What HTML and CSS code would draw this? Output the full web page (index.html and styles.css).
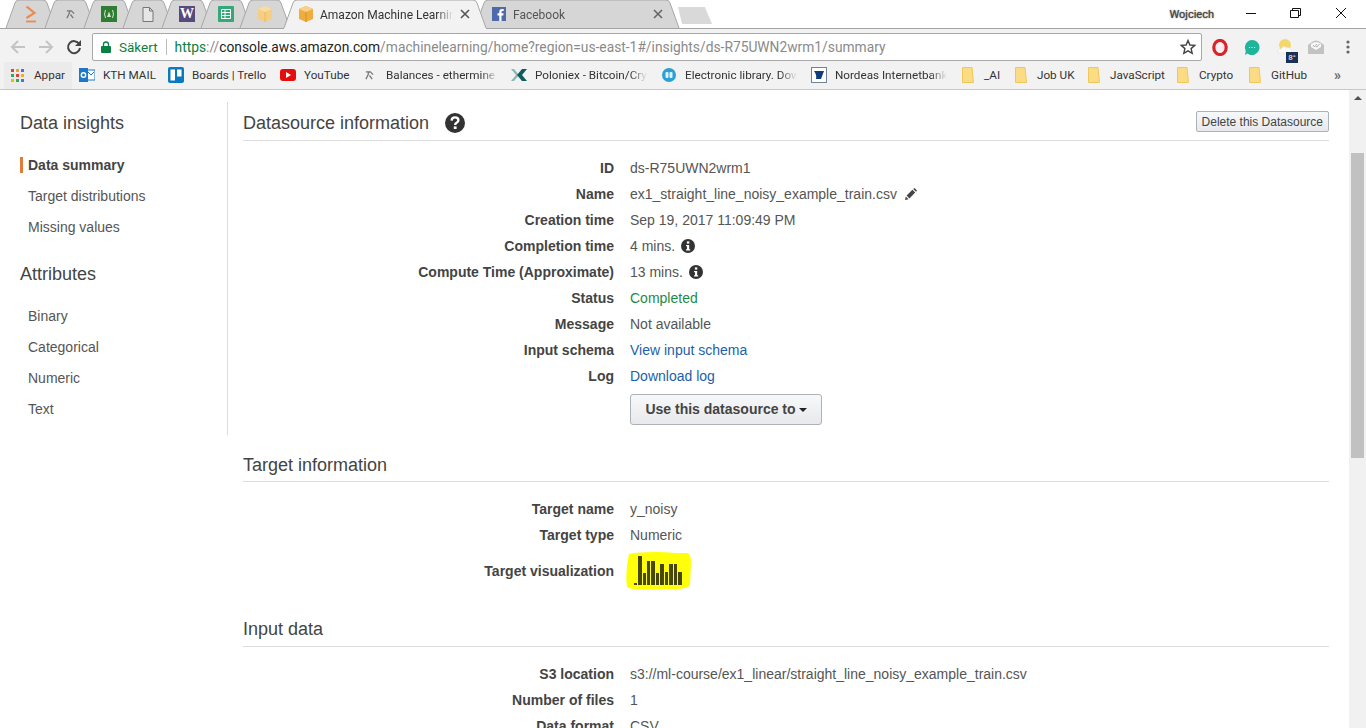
FILE: index.html
```html
<!DOCTYPE html>
<html lang="sv">
<head>
<meta charset="utf-8">
<title>Amazon Machine Learning</title>
<link rel="stylesheet" href="styles.css">
</head>
<body>
<header class="chrome">
  <div class="tabstrip">
    <div class="tab pinned"><svg class="shape" width="52" height="28"><path d="M1 28 L10 3 Q11 0 14 0 H38 Q41 0 42 3 L51 28"/></svg>
      <svg class="favicon fav-aws" width="12" height="17" viewBox="0 0 12 17"><path d="M1.5 .5 L9.5 7 L1.5 12" fill="none" stroke="#ee8a4f" stroke-width="2.2"/><path d="M1 15.5 H11" stroke="#ee8a4f" stroke-width="1.8"/></svg></div>
    <div class="tab pinned"><svg class="shape" width="52" height="28"><path d="M1 28 L10 3 Q11 0 14 0 H38 Q41 0 42 3 L51 28"/></svg>
      <svg class="favicon" width="9" height="9" viewBox="0 0 10 10"><path d="M1 1 H6 L9 4 M5 1 L3 3 M4 3 L1 9 M5 5 L8 9" fill="none" stroke="#777" stroke-width="1.4"/></svg></div>
    <div class="tab pinned"><svg class="shape" width="52" height="28"><path d="M1 28 L10 3 Q11 0 14 0 H38 Q41 0 42 3 L51 28"/></svg>
      <svg class="favicon" width="16" height="16" viewBox="0 0 16 16"><rect width="16" height="16" fill="#2e7d32"/><path d="M4.5 4 Q2.5 8 4.5 12 M11.5 4 Q13.5 8 11.5 12" fill="none" stroke="#cfe8cf" stroke-width="1"/><path d="M6 11 L8 5.5 L10 11 Z" fill="#cfe8cf"/></svg></div>
    <div class="tab pinned"><svg class="shape" width="52" height="28"><path d="M1 28 L10 3 Q11 0 14 0 H38 Q41 0 42 3 L51 28"/></svg>
      <svg class="favicon" width="12" height="15" viewBox="0 0 12 15"><path d="M1 .5 H7.5 L11 4 V14.5 H1 Z M7.5 .5 V4 H11" fill="#e6e6e6" stroke="#777"/></svg></div>
    <div class="tab pinned"><svg class="shape" width="52" height="28"><path d="M1 28 L10 3 Q11 0 14 0 H38 Q41 0 42 3 L51 28"/></svg>
      <span class="favicon fav-w">W</span></div>
    <div class="tab pinned"><svg class="shape" width="52" height="28"><path d="M1 28 L10 3 Q11 0 14 0 H38 Q41 0 42 3 L51 28"/></svg>
      <svg class="favicon" width="16" height="16" viewBox="0 0 16 16"><rect width="16" height="16" rx="1" fill="#34a878"/><path d="M3.5 3.5 H12.5 V12.5 H3.5 Z M3.5 6.5 H12.5 M3.5 9.5 H12.5 M7 3.5 V12.5" fill="none" stroke="#fff"/></svg></div>
    <div class="tab pinned last"><svg class="shape" width="52" height="28"><path d="M1 28 L10 3 Q11 0 14 0 H38 Q41 0 42 3 L51 28"/></svg>
      <svg class="favicon" width="16" height="16" viewBox="0 0 16 16"><path d="M1 3 L8 0 L15 3 V13 L8 16 L1 13 Z" fill="#f5cd83"/><path d="M1 3 L8 6 L15 3 L8 0 Z" fill="#f8dca6"/><path d="M8 6 V16" stroke="#eeb95e"/></svg></div>
    <div class="tab wide active"><svg class="shape" width="204" height="28"><path d="M1 28 L10 3 Q11 0 14 0 H190 Q193 0 194 3 L203 28"/></svg>
      <svg class="icon16" width="16" height="16" viewBox="0 0 16 16"><path d="M1 3 L8 0 L15 3 V13 L8 16 L1 13 Z" fill="#f0ad3f"/><path d="M1 3 L8 6 L15 3 L8 0 Z" fill="#f7d08a"/><path d="M8 6 V16" stroke="#d68f22"/></svg>
      <span class="tab-title">Amazon Machine Learning</span>
      <svg class="tab-close" width="10" height="10" viewBox="0 0 10 10"><path d="M1 1 L9 9 M9 1 L1 9" stroke="#555" stroke-width="1.6"/></svg></div>
    <div class="tab wide fb"><svg class="shape" width="206" height="28"><path d="M1 28 L10 3 Q11 0 14 0 H192 Q195 0 196 3 L205 28"/></svg>
      <svg class="icon16" width="14" height="14" viewBox="0 0 14 14"><rect width="14" height="14" fill="#4f6aab"/><path d="M9.5 14 V8.5 H11.3 L11.6 6.3 H9.5 V5 Q9.5 4 10.6 4 H11.7 V2 H10 Q7.3 2 7.3 4.7 V6.3 H5.5 V8.5 H7.3 V14 Z" fill="#fff"/></svg>
      <span class="tab-title dim">Facebook</span>
      <svg class="tab-close" width="10" height="10" viewBox="0 0 10 10"><path d="M1 1 L9 9 M9 1 L1 9" stroke="#666" stroke-width="1.6"/></svg></div>
    <div class="newtab"></div>
    <div class="winbar">
      <span class="profile">Wojciech</span>
      <svg class="winctl" width="46" height="14" viewBox="0 0 46 14"><path d="M18 6.5 H28" stroke="#111"/></svg>
      <svg class="winctl" width="46" height="14" viewBox="0 0 46 14"><path d="M16.5 3.5 H24.5 V10.5 H16.5 Z M18.5 3.5 V1.5 H26.5 V8.5 H24.5" fill="none" stroke="#111"/></svg>
      <svg class="winctl" width="46" height="14" viewBox="0 0 46 14"><path d="M16 1 L26 11 M26 1 L16 11" stroke="#111"/></svg>
    </div>
  </div>
  <div class="toolbar">
    <svg class="navbtn" width="16" height="14" viewBox="0 0 16 14"><path d="M15 7 H2 M8 1 L2 7 L8 13" fill="none" stroke="#c4c4c4" stroke-width="2"/></svg>
    <svg class="navbtn" width="16" height="14" viewBox="0 0 16 14"><path d="M1 7 H14 M8 1 L14 7 L8 13" fill="none" stroke="#c4c4c4" stroke-width="2"/></svg>
    <svg class="navbtn" width="16" height="16" viewBox="0 0 16 16"><path d="M13.2 5 A6 6 0 1 0 14 9" fill="none" stroke="#444" stroke-width="2"/><path d="M15 1 V7 H9 Z" fill="#444"/></svg>
    <div class="omnibox">
      <svg class="lock" width="10" height="12" viewBox="0 0 10 12"><path d="M2.5 5 V3.5 A2.5 2.5 0 0 1 7.5 3.5 V5" fill="none" stroke="#0b8043" stroke-width="1.3"/><rect y="5" width="10" height="7" rx="1" fill="#0b8043"/></svg>
      <span class="secure">Säkert</span>
      <span class="omni-sep"></span>
      <span class="url"><span class="url-https">https</span><span class="url-dim">://</span><span class="url-host">console.aws.amazon.com</span><span class="url-dim">/machinelearning/home?region=us-east-1#/insights/ds-R75UWN2wrm1/summary</span></span>
      <svg class="star" width="16" height="16" viewBox="0 0 16 16"><path d="M8 1.5 L9.9 6 L14.8 6.4 L11.1 9.6 L12.2 14.4 L8 11.9 L3.8 14.4 L4.9 9.6 L1.2 6.4 L6.1 6 Z" fill="none" stroke="#444" stroke-width="1.4"/></svg>
    </div>
    <div class="extensions">
      <svg class="ext opera" width="16" height="17" viewBox="0 0 16 17"><ellipse cx="8" cy="8.5" rx="6.2" ry="7" fill="#f6eaea" stroke="#d8232a" stroke-width="3.2"/><path d="M5.5 11 V5.5 Q5.5 4.6 6.2 4.6 V4 Q7 3 7.6 4 Q8.6 3 9.2 4 Q10.4 4 10.4 5.5 V10 Q10.4 13 8 13 Q6.2 13 5.5 11 Z" fill="#f8f0f0"/></svg>
      <svg class="ext bubble" width="16" height="17" viewBox="0 0 16 17"><path d="M8 1 A7.5 7.5 0 1 1 3.5 14.5 L1 16 L1.8 12 A7.5 7.5 0 0 1 8 1 Z" fill="#1fb59a"/><path d="M5 8.5 H5.9 M7.6 8.5 H8.5 M10.2 8.5 H11.1" stroke="#fff" stroke-width="1.2"/></svg>
      <div class="ext weather">
        <svg class="weather-art" width="16" height="15" viewBox="0 0 16 15"><circle cx="8" cy="6" r="6" fill="#f5d76e"/><path d="M1 14 Q0 10 4 10 Q6 6 10 8.5 Q15 8.5 15 14 Z" fill="#fafafa" stroke="#dcdcdc" stroke-width=".5"/></svg>
        <span class="temp">8°</span>
      </div>
      <svg class="ext mail" width="16" height="15" viewBox="0 0 16 15"><path d="M0 5 L4 2 Q8 -1 12 2 L16 5 V14 H0 Z" fill="#c2c2c2"/><path d="M3 4 Q8 0 13 4 V7 L8 10 L3 7 Z" fill="#f7f7f7"/><path d="M5 5 L6.5 7 L9 4 M8 6.5 L9 7 L11.5 4" fill="none" stroke="#a0a0a0" stroke-width=".8"/></svg>
      <svg class="ext menu" width="4" height="14" viewBox="0 0 4 14"><circle cx="2" cy="2" r="1.6" fill="#666"/><circle cx="2" cy="7" r="1.6" fill="#666"/><circle cx="2" cy="12" r="1.6" fill="#666"/></svg>
    </div>
  </div>
  <nav class="bookmarks">
    <a class="bm apps">
      <svg width="13" height="13" viewBox="0 0 13 13"><g><rect width="3" height="3" fill="#d9453c"/><rect x="5" width="3" height="3" fill="#e8a33d"/><rect x="10" width="3" height="3" fill="#3b78e7"/><rect y="5" width="3" height="3" fill="#34a853"/><rect x="5" y="5" width="3" height="3" fill="#d9453c"/><rect x="10" y="5" width="3" height="3" fill="#f4b400"/><rect y="10" width="3" height="3" fill="#f4b400"/><rect x="5" y="10" width="3" height="3" fill="#34a853"/><rect x="10" y="10" width="3" height="3" fill="#3b78e7"/></g></svg>
      <span>Appar</span></a>
    <a class="bm"><svg width="16" height="16" viewBox="0 0 16 16"><rect x="7" y="3" width="9" height="10" fill="#fff" stroke="#1f77c9"/><path d="M9 5 L12 8 L15 5" fill="none" stroke="#1f77c9"/><rect y="1" width="9" height="14" fill="#1f77c9"/><circle cx="4.5" cy="8" r="2.2" fill="none" stroke="#fff" stroke-width="1.4"/></svg><span>KTH MAIL</span></a>
    <a class="bm"><svg width="16" height="16" viewBox="0 0 16 16"><rect width="16" height="16" rx="2" fill="#0a79bf"/><rect x="2.5" y="2.5" width="4.5" height="11" fill="#fff"/><rect x="9" y="2.5" width="4.5" height="7" fill="#fff"/></svg><span>Boards | Trello</span></a>
    <a class="bm"><svg width="16" height="12" viewBox="0 0 16 12"><rect width="16" height="12" rx="3" fill="#e60d0d"/><path d="M6 3 L11 6 L6 9 Z" fill="#fff"/></svg><span>YouTube</span></a>
    <a class="bm bal"><svg width="9" height="9" viewBox="0 0 10 10"><path d="M1 1 H6 L9 4 M5 1 L3 3 M4 3 L1 9 M5 5 L8 9" fill="none" stroke="#777" stroke-width="1.4"/></svg><span class="fade">Balances - ethermine</span></a>
    <a class="bm"><svg width="16" height="12" viewBox="0 0 16 12"><path d="M0 0 L5 6 L0 12 H3 L8 6 L3 0 Z" fill="#8fb6b6"/><path d="M16 0 L11 6 L16 12 H11 L6 6 L11 0 Z" fill="#0f5c5c"/></svg><span class="fade">Poloniex - Bitcoin/Crypto</span></a>
    <a class="bm lib"><svg width="14" height="14" viewBox="0 0 14 14"><circle cx="7" cy="7" r="7" fill="#2aa0d6"/><rect x="3.5" y="4" width="3" height="6" rx="1" fill="#dff3fb"/><rect x="7.5" y="4" width="3" height="6" rx="1" fill="#dff3fb"/></svg><span class="fade">Electronic library. Download</span></a>
    <a class="bm"><svg width="16" height="16" viewBox="0 0 16 16"><rect x=".5" y=".5" width="15" height="15" fill="#fff" stroke="#6f8595"/><path d="M3 4 H13 L10 12 H5 Q6 8 3 4 Z" fill="#0f3d7a"/></svg><span class="fade">Nordeas Internetbank</span></a>
    <a class="bm folder"><svg width="12" height="16" viewBox="0 0 12 16"><path d="M.5 .5 H10 L11.5 15.5 H.5 Z" fill="#fbdc85" stroke="#f0c85a"/></svg><span>_AI</span></a>
    <a class="bm folder"><svg width="12" height="16" viewBox="0 0 12 16"><path d="M.5 .5 H10 L11.5 15.5 H.5 Z" fill="#fbdc85" stroke="#f0c85a"/></svg><span>Job UK</span></a>
    <a class="bm folder"><svg width="12" height="16" viewBox="0 0 12 16"><path d="M.5 .5 H10 L11.5 15.5 H.5 Z" fill="#fbdc85" stroke="#f0c85a"/></svg><span>JavaScript</span></a>
    <a class="bm folder"><svg width="12" height="16" viewBox="0 0 12 16"><path d="M.5 .5 H10 L11.5 15.5 H.5 Z" fill="#fbdc85" stroke="#f0c85a"/></svg><span>Crypto</span></a>
    <a class="bm folder"><svg width="12" height="16" viewBox="0 0 12 16"><path d="M.5 .5 H10 L11.5 15.5 H.5 Z" fill="#fbdc85" stroke="#f0c85a"/></svg><span>GitHub</span></a>
    <span class="more">»</span>
  </nav>
</header>
<div class="page">
  <main class="main">
    <aside class="sidebar">
      <h3 class="side-title">Data insights</h3>
      <ul class="side-list">
        <li class="side-item current">Data summary</li>
        <li class="side-item">Target distributions</li>
        <li class="side-item">Missing values</li>
      </ul>
      <h3 class="side-title attrs">Attributes</h3>
      <ul class="side-list">
        <li class="side-item">Binary</li>
        <li class="side-item">Categorical</li>
        <li class="side-item">Numeric</li>
        <li class="side-item">Text</li>
      </ul>
    </aside>
    <div class="content">
      <section class="section first">
        <div class="sec-head">
          <h2 class="sec-title">Datasource information</h2>
          <svg class="help" width="20" height="20" viewBox="0 0 20 20"><circle cx="10" cy="10" r="10" fill="#333"/><path d="M6.6 7.6 Q6.8 4.4 10 4.4 Q13.4 4.4 13.4 7.2 Q13.4 8.9 11.6 9.8 Q10.2 10.5 10.2 12" fill="none" stroke="#fff" stroke-width="2.4"/><rect x="8.8" y="13.4" width="2.8" height="2.6" fill="#fff"/></svg>
          <button class="btn-del">Delete this Datasource</button>
        </div>
        <dl class="rows">
          <div class="row"><dt>ID</dt><dd>ds-R75UWN2wrm1</dd></div>
          <div class="row"><dt>Name</dt><dd><span>ex1_straight_line_noisy_example_train.csv</span><svg class="pencil" width="12" height="12" viewBox="0 0 12 12"><path d="M0 12 L.8 8.4 L3.6 11.2 Z M1.6 7.6 L7.4 1.8 L10.2 4.6 L4.4 10.4 Z M8.2 1 L9 .3 Q9.4 0 9.8 .3 L11.7 2.2 Q12 2.6 11.7 3 L11 3.8 Z" fill="#444"/></svg></dd></div>
          <div class="row"><dt>Creation time</dt><dd>Sep 19, 2017 11:09:49 PM</dd></div>
          <div class="row"><dt>Completion time</dt><dd><span>4 mins.</span><svg class="info" width="14" height="14" viewBox="0 0 14 14"><circle cx="7" cy="7" r="7" fill="#333"/><rect x="5.9" y="2.4" width="2.4" height="2.2" fill="#fff"/><path d="M5 6 H8.2 V10.2 H9.2 V11.4 H5 V10.2 H6 V7.2 H5 Z" fill="#fff"/></svg></dd></div>
          <div class="row"><dt>Compute Time (Approximate)</dt><dd><span>13 mins.</span><svg class="info" width="14" height="14" viewBox="0 0 14 14"><circle cx="7" cy="7" r="7" fill="#333"/><rect x="5.9" y="2.4" width="2.4" height="2.2" fill="#fff"/><path d="M5 6 H8.2 V10.2 H9.2 V11.4 H5 V10.2 H6 V7.2 H5 Z" fill="#fff"/></svg></dd></div>
          <div class="row"><dt>Status</dt><dd class="ok">Completed</dd></div>
          <div class="row"><dt>Message</dt><dd>Not available</dd></div>
          <div class="row"><dt>Input schema</dt><dd><a class="link">View input schema</a></dd></div>
          <div class="row"><dt>Log</dt><dd><a class="link">Download log</a></dd></div>
        </dl>
        <button class="btn-use">Use this datasource to<span class="caret"></span></button>
      </section>
      <section class="section target">
        <div class="sec-head"><h2 class="sec-title">Target information</h2></div>
        <dl class="rows">
          <div class="row"><dt>Target name</dt><dd>y_noisy</dd></div>
          <div class="row"><dt>Target type</dt><dd>Numeric</dd></div>
          <div class="row viz"><dt>Target visualization</dt><dd class="viz-cell">
            <svg width="66" height="40" viewBox="0 0 66 40"><path d="M3 3 L8 2 Q30 0 50 2 L62 2 Q65 4 65 12 L64 34 Q62 39 40 38 Q6 40 1 36 Q-1 20 3 3 Z" fill="#ffff0a"/><path d="M8 34 V32 H11 V34 Z M12 34 V5 H16 V34 Z M17 34 V22 H20 V34 Z M21 34 V10 H24 V34 Z M25 34 V10 H29 V34 Z M30 34 V22 H33 V34 Z M34 34 V13 H38 V34 Z M39 34 V21 H42 V34 Z M43 34 V13 H47 V34 Z M48 34 V13 H51 V34 Z M52 34 V21 H56 V34 Z" fill="#47470a"/></svg></dd></div>
        </dl>
      </section>
      <section class="section input">
        <div class="sec-head"><h2 class="sec-title">Input data</h2></div>
        <dl class="rows">
          <div class="row"><dt>S3 location</dt><dd>s3://ml-course/ex1_linear/straight_line_noisy_example_train.csv</dd></div>
          <div class="row"><dt>Number of files</dt><dd>1</dd></div>
          <div class="row"><dt>Data format</dt><dd>CSV</dd></div>
        </dl>
      </section>
    </div>
  </main>
  <div class="scrollbar">
    <span class="sb-up"></span>
    <span class="sb-thumb"></span>
  </div>
</div>
</body>
</html>
```
FILE: styles.css
```css
* { box-sizing: border-box; }
html, body { margin: 0; padding: 0; height: 728px; overflow: hidden; background: #fff; }
body { font-family: "Liberation Sans", Arial, sans-serif; font-size: 14px; color: #555; display: flex; flex-direction: column; }
h2, h3, ul, dl, dd { margin: 0; padding: 0; }
ul { list-style: none; }

/* browser chrome */
.chrome { flex: none; font-family: Roboto, "Noto Sans", sans-serif; }
.tabstrip { height: 29px; display: flex; padding-left: 5px; background: #fff; border-bottom: 1px solid #a4a4a4; }
.tab { position: relative; height: 28px; flex: none; display: flex; align-items: center; }
.tab .shape { position: absolute; left: 0; top: 0; fill: #d6d6d6; stroke: #a6a6a6; stroke-width: 1; }
.tab > *:not(.shape) { position: relative; }
.pinned { width: 52px; margin-right: -13px; justify-content: center; }
.pinned.last { margin-right: -8px; }
.wide { width: 204px; padding-left: 15px; }
.active { z-index: 2; }
.active .shape { fill: #f2f2f2; }
.active::after { content: ""; position: absolute; left: 1px; right: 1px; bottom: -1px; height: 1px; background: #f2f2f2; }
.fb { width: 206px; margin-left: -13px; padding-left: 18px; }
.icon16 { flex: none; }
.tab-title { font-size: 12px; line-height: 16px; padding-top: 2px; color: #333; margin-left: 6px; width: 133px; white-space: nowrap; overflow: hidden; -webkit-mask-image: linear-gradient(90deg, #000 88%, transparent); mask-image: linear-gradient(90deg, #000 88%, transparent); }
.tab-title.dim { color: #555; margin-left: 7px; }
.tab-close { margin-left: 7px; flex: none; }
.fav-w { width: 16px; height: 16px; background: #574a7d; color: #fff; font: bold 14px/16px "Liberation Serif", serif; text-align: center; }
.newtab { width: 34px; height: 17px; margin: 7px 0 0 -2px; background: #d9d9d9; clip-path: polygon(0 0, 79% 0, 100% 100%, 12% 100%); }
.winbar { margin-left: auto; display: flex; align-items: center; height: 28px; }
.profile { font-size: 11px; color: #444; text-shadow: 0 0 1px #777, 0 0 2px #aaa; margin-right: 14px; }
.winctl { flex: none; }

.toolbar { height: 32px; background: #f2f2f2; display: flex; align-items: center; padding: 4px 0 0 10px; }
.navbtn { flex: none; margin-right: 12px; }
.omnibox { width: 1110px; height: 28px; margin-left: -2px; background: #fff; border: 1px solid #a9a9a9; border-radius: 2px; display: flex; align-items: center; padding-left: 8px; flex: none; }
.lock { flex: none; }
.secure { font-size: 13.5px; color: #0b8043; margin-left: 8px; }
.omni-sep { width: 1px; height: 16px; background: #bbb; margin: 0 8px; }
.url { font-size: 13.8px; white-space: nowrap; }
.url-https { color: #0b8043; }
.url-dim { color: #8a8a8a; }
.url-host { color: #222; }
.star { margin-left: auto; margin-right: 5px; flex: none; }
.extensions { display: flex; align-items: center; padding-left: 10px; }
.ext { flex: none; }
.bubble { margin-left: 16px; }
.weather { position: relative; width: 18px; height: 18px; margin-left: 16px; }
.weather-art { position: absolute; left: 1px; top: 1px; }
.temp { position: absolute; left: 10px; top: 14px; width: 12px; height: 11px; background: #1c2f55; color: #fff; font-size: 8px; line-height: 11px; text-align: center; }
.mail { margin-left: 14px; }
.menu { margin-left: 22px; }

.bookmarks { height: 29px; background: #f2f2f2; border-bottom: 1px solid #c8c8c8; padding-left: 4px; font-size: 11.7px; color: #333; display: grid; align-items: center; grid-template-columns: 75px 89px 112px 84px 147px 151px 149px 151px 53px 73px 89px 72px 85px 20px; }
.bm { display: flex; align-items: center; gap: 8px; white-space: nowrap; }
.bm svg { flex: none; }
.apps { height: 27px; width: 68px; background: #ebebeb; padding-left: 7px; gap: 10px; }
.fade { width: 112px; overflow: hidden; -webkit-mask-image: linear-gradient(90deg, #000 85%, transparent); mask-image: linear-gradient(90deg, #000 85%, transparent); }
.bal { gap: 12px; padding-left: 1px; }
.lib { gap: 9px; }
.folder { gap: 10px; }
.more { font-size: 14px; font-weight: 700; color: #666; }

/* page */
.page { flex: 1; min-height: 0; display: flex; overflow: hidden; }
.main { flex: 1; min-width: 0; display: flex; align-items: flex-start; padding: 12px 20px 0 20px; }
.scrollbar { width: 17px; flex: none; background: #f1f1f1; display: flex; flex-direction: column; align-items: center; }
.sb-up { width: 0; height: 0; margin-top: 6px; border: 4px solid transparent; border-top: 0; border-bottom: 4px solid #505050; }
.sb-thumb { width: 13px; height: 305px; margin-top: 53px; background: #c1c1c1; }

.sidebar { width: 208px; height: 333px; flex: none; border-right: 1px solid #ddd; padding-top: 11px; }
.side-title { font-size: 18px; font-weight: 400; line-height: 21px; color: #444; }
.side-title.attrs { margin-top: 21px; }
.side-list { margin-top: 16px; }
.side-item { height: 31px; line-height: 31px; padding-left: 8px; position: relative; }
.current { font-weight: 700; color: #444; }
.current::before { content: ""; position: absolute; left: 0; top: 7px; width: 3px; height: 16px; background: #e07b39; }

.content { flex: 1; min-width: 0; margin-left: 15px; }
.sec-head { display: flex; align-items: center; height: 27px; padding-bottom: 6px; border-bottom: 1px solid #ddd; }
.section.first .sec-head { height: 39px; padding: 4px 0 0; }
.section.input .sec-head { padding-bottom: 7px; }
.sec-title { font-size: 18px; font-weight: 400; line-height: 21px; color: #444; }
.help { margin-left: 16px; flex: none; }
.btn-del { margin: 0 0 3px auto; height: 21px; padding: 0 5px; font: 12px "Liberation Sans", sans-serif; color: #444; background: linear-gradient(#f7f8fa, #e7e9ec); border: 1px solid #adb1b8; border-radius: 2px; }
.rows { margin-top: 14px; }
.row { display: flex; height: 26px; align-items: center; }
.row dt { width: 371px; flex: none; text-align: right; font-weight: 700; color: #444; }
.row dd { margin-left: 16px; display: flex; align-items: center; gap: 6px; }
.pencil { margin-left: 2px; }
.ok { color: #1f8a45; }
.link { color: #1b5faa; }
.btn-use { display: block; margin: 5px 0 0 387px; width: 192px; height: 31px; padding: 0 0 2px; font: bold 14px "Liberation Sans", sans-serif; color: #444; background: linear-gradient(#f7f8fa, #e7e9ec); border: 1px solid #adb1b8; border-radius: 3px; }
.caret { display: inline-block; margin-left: 3px; vertical-align: middle; border: 4px solid transparent; border-bottom: 0; border-top: 4px solid #222; }
.section.target { margin-top: 30px; }
.section.input { margin-top: 26px; }
.viz { height: 46px; }
.row .viz-cell { margin-left: 12px; }
```
